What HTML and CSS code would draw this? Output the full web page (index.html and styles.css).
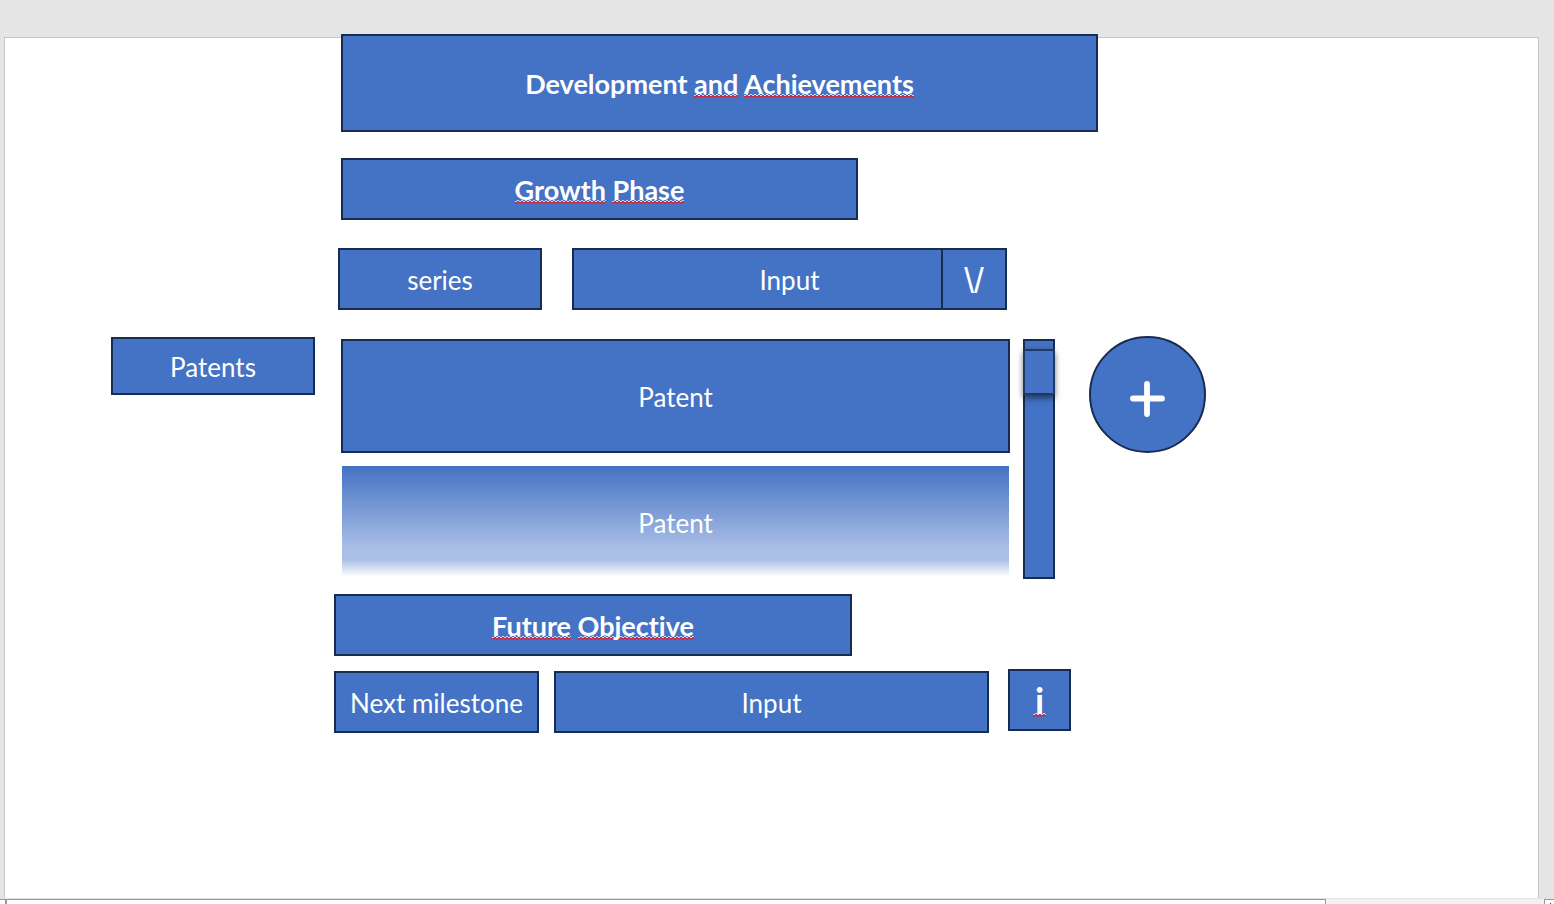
FILE: index.html
```
<!DOCTYPE html>
<html lang="en">
<head>
<meta charset="utf-8">
<title>Development and Achievements</title>
<link rel="stylesheet" href="styles.css">
</head>
<body>
<main class="sheet">
  <form class="board">
    <h1 class="box title"><span>Development <u class="typo">and</u> <u class="typo">Achievements</u></span></h1>
    <h2 class="box growth"><span><u class="typo">Growth</u> <u class="typo">Phase</u></span></h2>
    <div class="row series">
      <label class="box name" for="series">series</label>
      <div class="picker">
        <select class="box" id="series"><option>Input</option></select>
        <span class="arrow" aria-hidden="true">\/</span>
      </div>
    </div>
    <section class="row patents" aria-labelledby="patents">
      <h3 class="box name" id="patents">Patents</h3>
      <ul class="list">
        <li class="box">Patent</li>
        <li class="fading">Patent</li>
      </ul>
      <div class="track"><div class="thumb"></div></div>
      <button class="add" type="button" aria-label="Add patent">
        <svg viewBox="0 0 36 36" width="36" height="36"><path d="M17 3V33M3 17.500H32" stroke="#fff" stroke-width="5.800" stroke-linecap="round"/></svg>
      </button>
    </section>
    <h2 class="box future"><span><u class="typo">Future</u> <u class="typo">Objective</u></span></h2>
    <div class="row milestone">
      <label class="box name" for="milestone">Next milestone</label>
      <input class="box" id="milestone" type="text" value="Input">
      <button class="box info" type="button"><span><u class="typo">i</u></span></button>
    </div>
  </form>
</main>
<footer class="scroller"><div class="bar"></div><div class="corner"></div></footer>
</body>
</html>
```
FILE: styles.css
```
* { box-sizing: border-box; }

body {
  margin: 0;
  min-height: 100vh;
  display: flex;
  flex-direction: column;
  padding-top: 37px;
  background: #e5e5e5;
  font: 26px/32px Lato, "Noto Sans", sans-serif;
  font-variant-ligatures: none;
  color: #fff;
}

.sheet {
  flex: 1;
  margin: 0 15px 0 4px;
  padding: 0 332px 0 106px;
  background: #fff;
  border: 1px solid #c4c4c4;
  border-bottom: 0;
}

.board {
  display: flex;
  flex-direction: column;
  margin-top: -4px;
}

.box {
  display: flex;
  align-items: center;
  justify-content: center;
  min-width: 0;
  height: 62px;
  margin: 0;
  padding: 2px 0 0;
  background: #4472c4;
  border: 2px solid #172c51;
  border-radius: 0;
  color: #fff;
  font: inherit;
  font-variant-ligatures: none;
  text-align: center;
  white-space: nowrap;
}

h1.box, h2.box { font-size: 27px; font-weight: 700; }
.title { height: 98px; margin: 0 108px 26px 230px; }
.growth { margin: 0 348px 28px 230px; }
.future { margin: 0 354px 15px 223px; }

.typo {
  padding-bottom: 4px;
  text-decoration: none;
  background: url("data:image/svg+xml,%3Csvg xmlns='http://www.w3.org/2000/svg' width='4' height='6'%3E%3Cpath d='M-1 0L1 2L3 0L5 2' fill='none' stroke='%23d5dff2'/%3E%3Cpath d='M-1 1.500L1 3.500L3 1.500L5 3.500' fill='none' stroke='%23e0202c' stroke-width='1.200'/%3E%3C/svg%3E") 0 27px / 4px 6px repeat-x;
}

.row { display: flex; }
.name { flex: 0 0 204px; }

.series { gap: 30px; margin: 0 199px 26px 227px; }
.picker { position: relative; flex: 1; }
.picker select {
  width: 100%;
  appearance: none;
  text-align-last: center;
}
.arrow {
  position: absolute;
  inset: 0 0 0 auto;
  width: 66px;
  border: 2px solid #172c51;
  font: 35px/62px "Liberation Sans", sans-serif;
  text-align: center;
  pointer-events: none;
}

.patents { margin-bottom: 15px; }
.patents .name { height: 58px; margin: 1px 26px 0 0; }
.list {
  flex: 1;
  display: grid;
  gap: 13px;
  margin: 3px 0 0;
  padding: 0;
  list-style: none;
}
.list .box { height: 114px; }
.fading {
  display: flex;
  align-items: center;
  justify-content: center;
  height: 113px;
  margin: 0 1px;
  background: linear-gradient(#4472c4, #abbfe6 74%, #abbfe6 83%, #fff 98%);
}
.track {
  width: 32px;
  height: 240px;
  margin: 3px 34px 0 13px;
  padding-top: 8px;
  background: #4472c4;
  border: 2px solid #172c51;
}
.thumb {
  height: 46px;
  margin: 0 -2px;
  background: #4472c4;
  border: 2px solid #1f3864;
  box-shadow: 0 3px 6px #0008;
}
.add {
  display: grid;
  place-items: center;
  width: 117px;
  height: 117px;
  padding: 8px 0 0;
  background: #4472c4;
  border: 2px solid #172c51;
  border-radius: 50%;
}

.milestone { gap: 15px; margin: 0 135px 0 223px; }
.milestone .name { flex-basis: 205px; }
.milestone input { flex: 1; }
.milestone .info {
  width: 63px;
  margin: -2px 0 0 4px;
  padding: 0;
  font-size: 36px;
  font-weight: 700;
}
.info .typo { padding: 0 2px 4px; background-position-y: 35px; }

.scroller {
  display: flex;
  justify-content: space-between;
  height: 6px;
  border-top: 1px solid #e1e1e1;
  background: #f2f2f2;
}
.bar {
  flex: 0 1 1326px;
  background: linear-gradient(#999, #999) 5px 0 / 2px 100% no-repeat #fff;
  border: solid #999;
  border-width: 1px 1px 0 0;
}
.corner {
  width: 10px;
  background: linear-gradient(#333, #333) 5px 3px / 1px 1px no-repeat #fff;
  border: solid #999;
  border-width: 1px 0 0 1px;
}
```
